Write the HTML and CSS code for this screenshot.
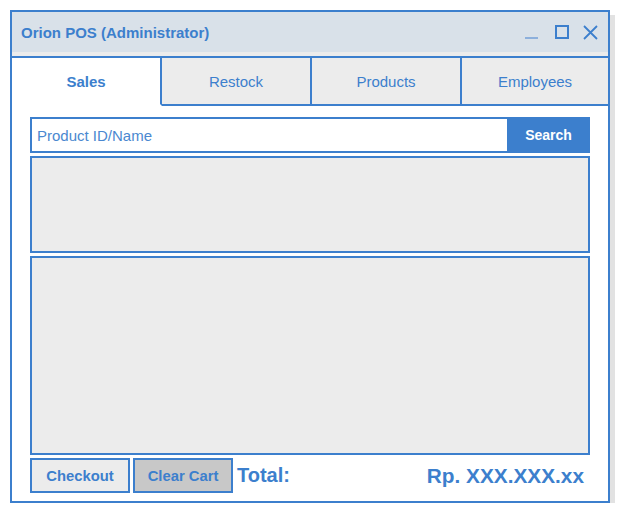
FILE: index.html
```html
<!DOCTYPE html>
<html>
<head>
<meta charset="utf-8">
<title>Orion POS</title>
<link rel="stylesheet" href="styles.css">
</head>
<body>
<div class="window">
  <div class="titlebar">
    <span class="title">Orion POS (Administrator)</span>
    <svg class="controls" width="80" height="20" viewBox="0 0 80 20">
      <rect x="7" y="15" width="13" height="2" fill="#8db0dc"/>
      <rect x="38" y="4" width="12" height="12" fill="none" stroke="#3c7fcd" stroke-width="2"/>
      <path d="M66 4 L79 17 M79 4 L66 17" stroke="#3c7fcd" stroke-width="1.8" fill="none"/>
    </svg>
  </div>
  <div class="strip"></div>
  <div class="tabs">
    <div class="tab active">Sales</div>
    <div class="tab">Restock</div>
    <div class="tab">Products</div>
    <div class="tab last">Employees</div>
  </div>
  <div class="content">
    <div class="search">
      <div class="input">Product ID/Name</div>
      <div class="search-btn">Search</div>
    </div>
    <div class="panel panel-top"></div>
    <div class="panel panel-main"></div>
    <div class="footer">
      <div class="btn">Checkout</div>
      <div class="btn btn-dark">Clear Cart</div>
      <span class="total-label">Total:</span>
      <span class="total-value">Rp. XXX.XXX.xx</span>
    </div>
  </div>
</div>
</body>
</html>
```
FILE: styles.css
```css
* { box-sizing: border-box; }
html, body { margin: 0; padding: 0; background: #fff; }
body {
  font-family: "Liberation Sans", Arial, sans-serif;
  color: #3c7fcd;
}
.window {
  margin: 10px 0 0 10px;
  width: 600px;
  height: 493px;
  border: 2px solid #3c7fcd;
  box-shadow: 5px 5px 0 #e2e2e2;
  display: flex;
  flex-direction: column;
  background: #fff;
}
.titlebar {
  height: 40px;
  background: #d9e1e9;
  display: flex;
  align-items: center;
  justify-content: space-between;
  padding: 0 10px 0 9px;
}
.title {
  font-weight: bold;
  font-size: 15px;
}
.controls { display: block; }
.strip {
  height: 4px;
  background: #ececec;
}
.tabs {
  display: grid;
  grid-template-columns: 150px 150px 150px 1fr;
  border-top: 2px solid #3c7fcd;
  height: 50px;
}
.tab {
  background: #ececec;
  border-right: 2px solid #3c7fcd;
  border-bottom: 2px solid #3c7fcd;
  display: flex;
  align-items: center;
  justify-content: center;
  font-size: 15px;
}
.tab.active {
  background: #fff;
  border-bottom-color: #fff;
  font-weight: bold;
}
.tab.last { border-right: none; }
.content {
  flex: 1;
  padding: 11px 18px 8px 18px;
  display: flex;
  flex-direction: column;
  gap: 3px;
}
.search {
  display: flex;
  height: 36px;
}
.input {
  flex: 1;
  border: 2px solid #3c7fcd;
  border-right: none;
  background: #fff;
  display: flex;
  align-items: center;
  padding-left: 5px;
  font-size: 15px;
  color: #4a88d0;
}
.search-btn {
  width: 83px;
  background: #3c7fcd;
  color: #fff;
  font-weight: bold;
  font-size: 14px;
  display: flex;
  align-items: center;
  justify-content: center;
}
.panel {
  border: 2px solid #3c7fcd;
  background: #ececec;
}
.panel-top { height: 97px; }
.panel-main { height: 199px; }
.footer {
  display: flex;
  align-items: center;
  gap: 3px;
  height: 35px;
}
.btn {
  width: 100px;
  height: 35px;
  border: 2px solid #3c7fcd;
  background: #ececec;
  display: flex;
  align-items: center;
  justify-content: center;
  font-weight: bold;
  font-size: 14.8px;
}
.btn-dark { background: #c8c8c8; }
.total-label {
  margin-left: 1px;
  font-weight: bold;
  font-size: 20px;
}
.total-value {
  margin-left: auto;
  margin-right: 6px;
  font-weight: bold;
  font-size: 20.8px;
}
```
